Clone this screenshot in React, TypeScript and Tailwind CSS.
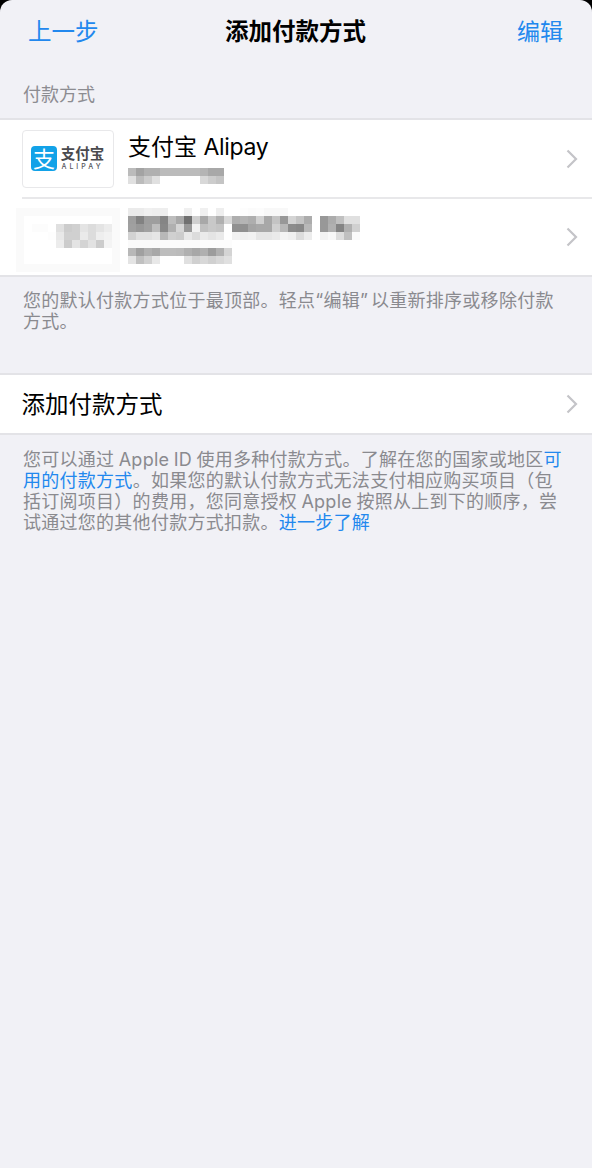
import React from 'react';

const FONT = 'font-["Inter","Noto_Sans_CJK_SC",sans-serif]';

// pixelated (redacted) areas from the screenshot, 8px cells
const subOne = [
  'bb a3 b0 b0 bb bb bb bb bb b4 a8 a8',
  'e0 bb cc e0 ff ff ff ff ff d8 cc c4',
];

const nameTwo = [
  'eb eb f0 ee ee ff ff f0 ff f0 ff ee ff ff fd fb fc f8 f8 f8 ff ff ff ff ff ff ff ff ff',
  '9e 82 9e 9e 85 bd a8 70 d0 a8 c8 b0 d8 ae b4 ae d0 a8 c4 98 d4 c4 ac ff 98 ac c0 e0 e0',
  'a0 98 a0 bd 88 b0 d5 98 f2 c0 c8 c4 ff 90 90 a4 a8 a8 d0 b8 8c 88 b8 ff 98 b0 84 b0 d0',
  'd2 e0 e0 e5 b8 d0 cc e8 dc ea e4 ea ff f2 f0 f2 e6 e6 ea f4 f0 dc ec ff f2 f8 de c0 fa',
  'fa fa fa fa fb fb fb fb fb fc fc fc fc ff ff ff ff ff ff ff ff ff ff ff ff ff ff ff ff',
  'b8 a0 b0 a8 bd bd bb b0 a8 b0 9c b0 d4 ff ff ff ff ff ff ff ff ff ff ff ff ff ff ff ff',
  'e4 c0 d0 e8 ff ff ff e0 d0 d8 d0 d8 e0 ff ff ff ff ff ff ff ff ff ff ff ff ff ff ff ff',
];

const logoTwo = [
  'fa fa fa fa fa fa fa fa fa fa fa fa fa',
  'fa ff ff ff ff ff ff ff ff ff ff ff fa',
  'fa ff fc fc ff e0 cc d0 e4 dc e4 ec fa',
  'fa ff ff ff fd e8 d0 d0 ea dc ee f2 fa',
  'fa ff ff ff ff ec cc e4 d4 e2 cc f4 fa',
  'fa ff ff ff ff ff ff ff ff ff ff ff fa',
  'fa ff ff ff ff ff ff ff ff ff ff ff fa',
  'fa fa fa fa fa fa fa fa fa fa fa fa fa',
];

function Mosaic({ rows }: { rows: string[] }) {
  const cols = rows[0].split(' ').length;
  return (
    <svg width={cols * 8} height={rows.length * 8} className="block shrink-0" shapeRendering="crispEdges">
      {rows.map((row, y) =>
        row.split(' ').map((c, x) => (
          <rect key={`${x}-${y}`} x={x * 8} y={y * 8} width={8} height={8} fill={`#${c}${c}${c}`} />
        ))
      )}
    </svg>
  );
}

function Chevron() {
  return (
    <svg width="12" height="20" viewBox="0 0 12 20" className="ml-auto mr-[14px] shrink-0">
      <path d="M1.5 1.5 L10 10 L1.5 18.5" fill="none" stroke="#c4c4c8" strokeWidth="2.2" />
    </svg>
  );
}

function AlipayLogo() {
  return (
    <div className="w-[92px] h-[58px] shrink-0 rounded-[4px] border-[1.5px] border-[#e8e8ea] bg-white flex items-center justify-center gap-[3px]">
      <div className="w-[26px] h-[25px] rounded-[4px] bg-[#12a2e8] flex items-center justify-center text-white text-[22px] leading-none">
        支
      </div>
      <div className="flex flex-col items-center w-[45px]">
        <span className="text-[14.5px] leading-[15px] font-bold text-[#4a4a4e] whitespace-nowrap">支付宝</span>
        <span className="mt-[2px] text-[7px] leading-[8px] font-medium tracking-[3px] text-[#55555a] whitespace-nowrap">ALIPAY</span>
      </div>
    </div>
  );
}

export default function App() {
  return (
    <div className={`w-[592px] h-[1168px] bg-black overflow-hidden ${FONT}`}>
      <div className="h-full bg-[#f1f1f6] rounded-t-[12px]">
        <header className="h-[64px] grid grid-cols-[1fr_auto_1fr] items-center pl-[28px] pr-[29px] text-[23.5px] leading-[30px]">
          <span className="text-[#2288ee]">上一步</span>
          <span className="font-semibold text-black">添加付款方式</span>
          <span className="text-[#2288ee] text-[23px] justify-self-end">编辑</span>
        </header>

        <div className="h-[54px] pl-[23px] pt-[20px] text-[18px] leading-[22px] text-[#8c8c91]">付款方式</div>

        <section className="bg-white border-y-2 border-[#e3e3e7]">
          <div className="h-[77px] flex items-center pl-[22px]">
            <AlipayLogo />
            <div className="ml-[14px] self-start pt-[13px]">
              <div className="text-[23px] leading-[28px] text-black whitespace-nowrap">
                支付宝 <span className="tracking-[-0.3px]">Alipay</span>
              </div>
              <div className="mt-[7px]">
                <Mosaic rows={subOne} />
              </div>
            </div>
            <Chevron />
          </div>
          <div className="ml-[22px] h-[2px] bg-[#e8e8ea]" />
          <div className="h-[76px] flex items-center pl-[16px]">
            <div className="self-start pt-[9px]">
              <Mosaic rows={logoTwo} />
            </div>
            <div className="ml-[8px] self-start pt-[9px]">
              <Mosaic rows={nameTwo} />
            </div>
            <Chevron />
          </div>
        </section>

        <p className="pl-[23px] pt-[13px] text-[18px] leading-[21px] tracking-[0.27px] text-[#8a8a8f] whitespace-nowrap">
          您的默认付款方式位于最顶部。轻点“编辑<span className="tracking-[3px]">”</span>以重新排序或移除付款
          <br />
          方式。
        </p>

        <section className="mt-[41px] h-[62px] bg-white border-y-2 border-[#e3e3e7] flex items-center pl-[21.5px]">
          <span className="mt-[2px] text-[23.5px] leading-[30px] text-black">添加付款方式</span>
          <Chevron />
        </section>

        <p className="pl-[23px] pt-[14px] text-[18px] leading-[21px] tracking-[0.27px] [word-spacing:-1px] text-[#8a8a8f] whitespace-nowrap">
          您可以通过 Apple ID 使用多种付款方式。了解在您的国家或地区<span className="text-[#2288ee]">可</span>
          <br />
          <span className="text-[#2288ee]">用的付款方式</span>。如果您的默认付款方式无法支付相应购买项目（包
          <br />
          括订阅项目）的费用，您同意授权 Apple 按照从上到下的顺序，尝
          <br />
          试通过您的其他付款方式扣款。<span className="text-[#2288ee]">进一步了解</span>
        </p>
      </div>
    </div>
  );
}
